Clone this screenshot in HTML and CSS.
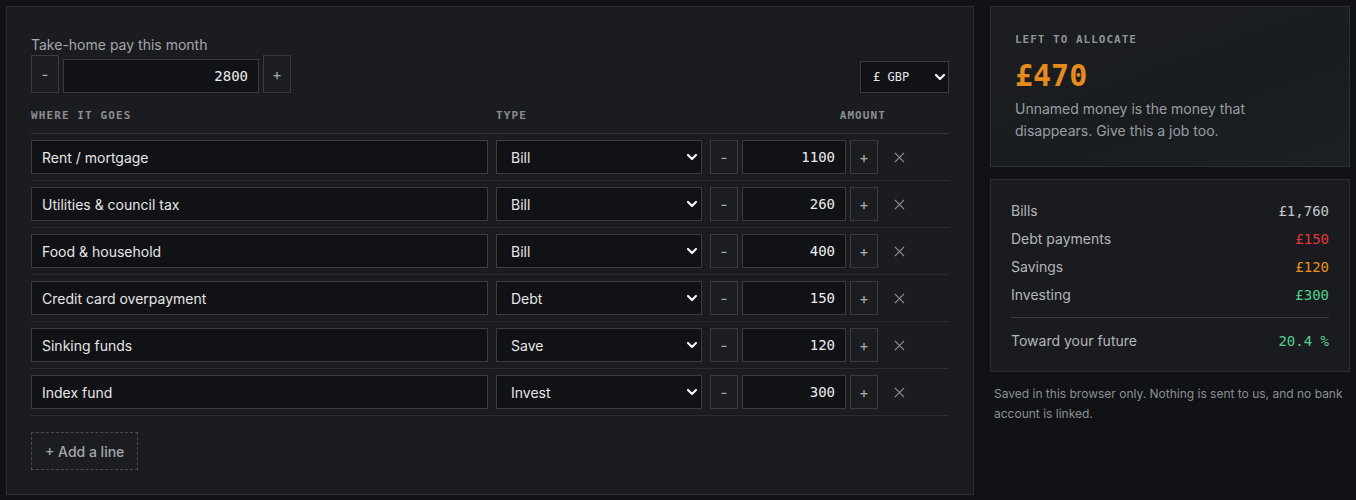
FILE: index.html
```html
<!DOCTYPE html>
<html lang="en">
<head>
<meta charset="utf-8">
<title>Budget</title>
<link rel="stylesheet" href="styles.css">
</head>
<body>
<div class="page">
  <section class="card main">
    <div class="pay-row">
      <div class="pay-left">
        <label class="pay-label">Take-home pay this month</label>
        <div class="pay-stepper">
          <button class="step tall">-</button>
          <input class="pay-input" value="2800">
          <button class="step tall">+</button>
        </div>
      </div>
      <div class="select-wrap currency">
        <select class="select mono-select"><option>£ GBP</option></select>
        <svg class="chev" viewBox="0 0 12 12"><polyline points="2,4 6,8 10,4"/></svg>
      </div>
    </div>

    <div class="grid head">
      <div>WHERE IT GOES</div>
      <div>TYPE</div>
      <div class="head-amount">AMOUNT</div>
      <div></div>
    </div>

    <div class="grid row">
      <input class="name" value="Rent / mortgage">
      <div class="select-wrap"><select class="select"><option>Bill</option></select><svg class="chev" viewBox="0 0 12 12"><polyline points="2,4 6,8 10,4"/></svg></div>
      <div class="amount"><button class="step">-</button><input class="amt" value="1100"><button class="step">+</button></div>
      <button class="remove"><svg viewBox="0 0 12 12"><path d="M1 1L11 11M11 1L1 11"/></svg></button>
    </div>
    <div class="grid row">
      <input class="name" value="Utilities &amp; council tax">
      <div class="select-wrap"><select class="select"><option>Bill</option></select><svg class="chev" viewBox="0 0 12 12"><polyline points="2,4 6,8 10,4"/></svg></div>
      <div class="amount"><button class="step">-</button><input class="amt" value="260"><button class="step">+</button></div>
      <button class="remove"><svg viewBox="0 0 12 12"><path d="M1 1L11 11M11 1L1 11"/></svg></button>
    </div>
    <div class="grid row">
      <input class="name" value="Food &amp; household">
      <div class="select-wrap"><select class="select"><option>Bill</option></select><svg class="chev" viewBox="0 0 12 12"><polyline points="2,4 6,8 10,4"/></svg></div>
      <div class="amount"><button class="step">-</button><input class="amt" value="400"><button class="step">+</button></div>
      <button class="remove"><svg viewBox="0 0 12 12"><path d="M1 1L11 11M11 1L1 11"/></svg></button>
    </div>
    <div class="grid row">
      <input class="name" value="Credit card overpayment">
      <div class="select-wrap"><select class="select"><option>Debt</option></select><svg class="chev" viewBox="0 0 12 12"><polyline points="2,4 6,8 10,4"/></svg></div>
      <div class="amount"><button class="step">-</button><input class="amt" value="150"><button class="step">+</button></div>
      <button class="remove"><svg viewBox="0 0 12 12"><path d="M1 1L11 11M11 1L1 11"/></svg></button>
    </div>
    <div class="grid row">
      <input class="name" value="Sinking funds">
      <div class="select-wrap"><select class="select"><option>Save</option></select><svg class="chev" viewBox="0 0 12 12"><polyline points="2,4 6,8 10,4"/></svg></div>
      <div class="amount"><button class="step">-</button><input class="amt" value="120"><button class="step">+</button></div>
      <button class="remove"><svg viewBox="0 0 12 12"><path d="M1 1L11 11M11 1L1 11"/></svg></button>
    </div>
    <div class="grid row">
      <input class="name" value="Index fund">
      <div class="select-wrap"><select class="select"><option>Invest</option></select><svg class="chev" viewBox="0 0 12 12"><polyline points="2,4 6,8 10,4"/></svg></div>
      <div class="amount"><button class="step">-</button><input class="amt" value="300"><button class="step">+</button></div>
      <button class="remove"><svg viewBox="0 0 12 12"><path d="M1 1L11 11M11 1L1 11"/></svg></button>
    </div>

    <button class="add">+ Add a line</button>
  </section>

  <aside class="side">
    <div class="card left">
      <div class="eyebrow">LEFT TO ALLOCATE</div>
      <div class="left-amount">£470</div>
      <p class="left-desc">Unnamed money is the money that<br>disappears. Give this a job too.</p>
    </div>
    <div class="card summary">
      <div class="sum-rows">
        <div class="sum-row"><span>Bills</span><span class="val">£1,760</span></div>
        <div class="sum-row"><span>Debt payments</span><span class="val red">£150</span></div>
        <div class="sum-row"><span>Savings</span><span class="val orange">£120</span></div>
        <div class="sum-row"><span>Investing</span><span class="val green">£300</span></div>
      </div>
      <div class="divider"></div>
      <div class="sum-row"><span>Toward your future</span><span class="val green">20.4 %</span></div>
    </div>
    <p class="note">Saved in this browser only. Nothing is sent to us, and no bank account is linked.</p>
  </aside>
</div>
</body>
</html>
```

FILE: styles.css
```css
* { box-sizing: border-box; }
html, body { margin: 0; }
body {
  background: #101216;
  font-family: Inter, "Noto Sans", sans-serif;
  color: #e6e6e8;
  padding: 6px;
}
.page {
  display: grid;
  grid-template-columns: 1fr 360px;
  gap: 16px;
  align-items: start;
}
.card {
  background: #1b1c20;
  border: 1px solid #2c2e32;
}
.main { padding: 24px; }

.pay-row {
  display: flex;
  justify-content: space-between;
  align-items: flex-end;
  margin-top: 3px;
}
.pay-label {
  display: block;
  font-size: 14px;
  line-height: 21px;
  color: #a3a6ab;
}
.pay-stepper {
  display: flex;
  align-items: flex-end;
  gap: 4px;
}
button, input, select {
  font: inherit;
  color: inherit;
  margin: 0;
}
.step {
  width: 28px;
  height: 34px;
  padding: 0;
  background: #1c1d21;
  border: 1px solid #3a3c41;
  color: #a9acb1;
  font-family: Inter, sans-serif;
  font-size: 15px;
  font-weight: 400;
}
.step.tall { height: 38px; }
.pay-input, .amt {
  height: 34px;
  background: #111215;
  border: 1px solid #3a3c41;
  text-align: right;
  padding: 0 10px;
  font-family: "DejaVu Sans Mono", monospace;
  font-size: 14px;
  color: #ececee;
  outline: none;
}
.pay-input { width: 196px; }
.amt { width: 104px; }

.select-wrap { position: relative; }
.select {
  appearance: none;
  -webkit-appearance: none;
  width: 100%;
  height: 34px;
  background: #111215;
  border: 1px solid #3a3c41;
  border-radius: 0;
  padding: 0 14px;
  font-size: 14px;
  color: #e6e6e8;
}
.chev {
  position: absolute;
  right: 4px;
  top: 50%;
  width: 12px;
  height: 12px;
  margin-top: -6px;
  fill: none;
  stroke: #f2f2f4;
  stroke-width: 2.2;
  stroke-linecap: round;
  stroke-linejoin: round;
  pointer-events: none;
}
.currency { width: 89px; }
.currency .select {
  height: 32px;
  padding: 0 12px;
  font-family: "DejaVu Sans Mono", monospace;
  font-size: 12px;
}
.currency .chev { right: 3px; }

.grid {
  display: grid;
  grid-template-columns: 1fr 206px 168px 63px;
  column-gap: 8px;
  align-items: center;
}
.head {
  margin-top: 16px;
  padding-bottom: 10px;
  border-bottom: 1px solid #34363b;
  font-family: "DejaVu Sans Mono", monospace;
  font-size: 11px;
  line-height: 14px;
  letter-spacing: 1.1px;
  color: #8b8e93;
  font-weight: bold;
}
.head-amount {
  text-align: right;
  margin-right: -8px;
}
.row {
  padding: 6px 0;
  border-bottom: 1px solid #2a2c30;
}
.name {
  height: 34px;
  background: #111215;
  border: 1px solid #3a3c41;
  padding: 0 10px;
  font-size: 14px;
  color: #e6e6e8;
  outline: none;
  width: 100%;
}
.amount {
  display: flex;
  gap: 4px;
}
.remove {
  width: 26px;
  height: 34px;
  background: none;
  border: 0;
  padding: 0;
  display: flex;
  align-items: center;
  justify-content: center;
}
.remove svg {
  width: 11px;
  height: 11px;
  stroke: #8d9095;
  stroke-width: 1.3;
  fill: none;
}
.add {
  margin-top: 16px;
  height: 38px;
  padding: 0 13px;
  background: #1c1d21;
  border: 1px dashed #4a4c51;
  color: #a3a6ab;
  font-size: 14px;
  font-weight: 500;
}

.side {
  display: flex;
  flex-direction: column;
  gap: 12px;
}
.left {
  padding: 24px;
  background: linear-gradient(160deg, #1b1d21 0%, #1a1d20 60%, #1b2022 100%);
}
.eyebrow {
  margin-top: 2px;
  font-family: "DejaVu Sans Mono", monospace;
  font-size: 11px;
  line-height: 14px;
  letter-spacing: 1px;
  color: #8f9297;
  font-weight: bold;
}
.left-amount {
  margin-top: 11px;
  font-family: "DejaVu Sans Mono", monospace;
  font-size: 30px;
  line-height: 36px;
  font-weight: bold;
  color: #e58a1d;
}
.left-desc {
  margin: 4px 0 0;
  font-size: 14px;
  line-height: 22px;
  color: #9a9da3;
}
.summary {
  padding: 21px 20px 20px;
  background: #1a1b1f;
}
.sum-rows {
  display: flex;
  flex-direction: column;
  gap: 8px;
}
.sum-row {
  display: flex;
  justify-content: space-between;
  font-size: 14px;
  line-height: 20px;
  color: #b3b6bb;
}
.val {
  font-family: "DejaVu Sans Mono", monospace;
  font-size: 14px;
  color: #c3c6ca;
}
.red { color: #e3363b; }
.orange { color: #e8901e; }
.green { color: #4fd189; }
.divider {
  height: 1px;
  background: #36383d;
  margin: 12px 0 13px;
}
.note {
  margin: 0;
  padding: 0 4px;
  font-size: 12px;
  line-height: 20px;
  color: #8b8e94;
}
```
